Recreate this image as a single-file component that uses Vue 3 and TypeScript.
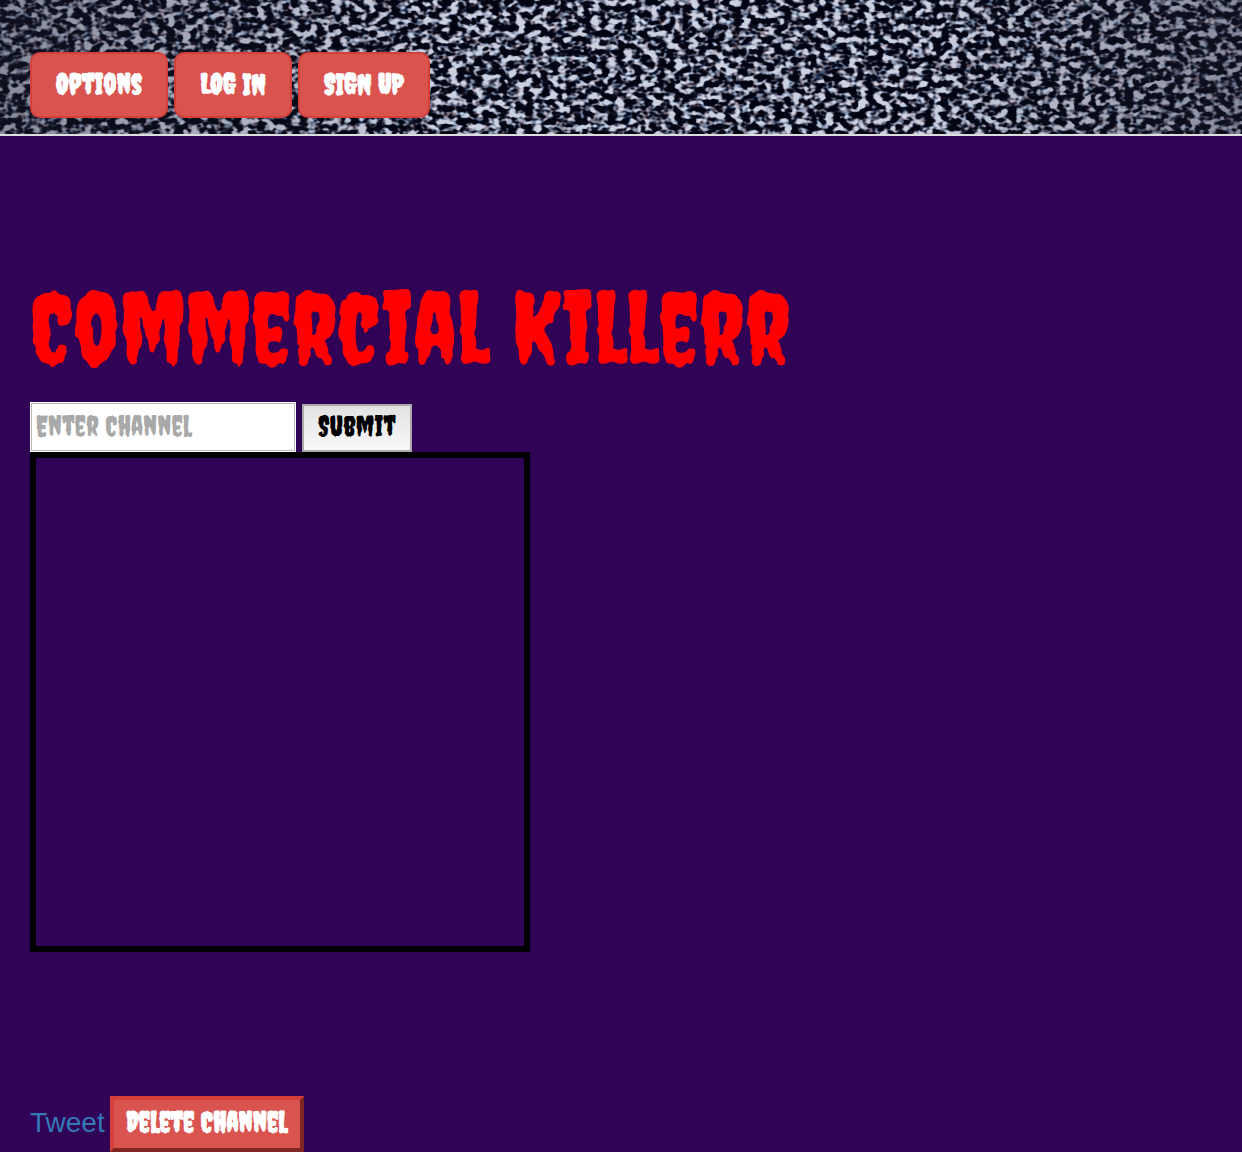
<script setup lang="ts">
import { ref } from 'vue'

const channel = ref('')
const navItems: { label: string; size: string }[] = [
  { label: 'Options', size: 'wide' },
  { label: 'LOG IN', size: 'narrow' },
  { label: 'SIGN UP', size: 'medium' },
]
</script>

<template>
  <div class="page">
    <header class="masthead">
      <svg class="static" aria-hidden="true">
        <defs>
          <filter id="tv-static" x="0" y="0" width="100%" height="100%" color-interpolation-filters="sRGB">
            <feTurbulence type="fractalNoise" baseFrequency="0.12 0.16" numOctaves="2" seed="41" result="grain" />
            <feColorMatrix
              in="grain"
              type="matrix"
              values="3 2.3 0.6 0 -2.58  3 2.3 0.8 0 -2.68  3 2.3 0.9 0 -2.7  0 0 0 0 1"
            />
            <feComponentTransfer>
              <feFuncR type="table" tableValues="0.01 0.08 0.38 0.62 0.8" />
              <feFuncG type="table" tableValues="0.02 0.09 0.4 0.64 0.82" />
              <feFuncB type="table" tableValues="0.07 0.14 0.44 0.7 0.88" />
            </feComponentTransfer>
          </filter>
          <linearGradient id="vignette">
            <stop offset="0" stop-color="#202030" stop-opacity="0.4" />
            <stop offset="0.35" stop-color="#202030" stop-opacity="0" />
            <stop offset="0.75" stop-color="#202030" stop-opacity="0" />
            <stop offset="1" stop-color="#202030" stop-opacity="0.4" />
          </linearGradient>
        </defs>
        <rect width="100%" height="100%" filter="url(#tv-static)" />
        <rect width="100%" height="100%" fill="url(#vignette)" />
      </svg>
      <nav class="nav">
        <button v-for="item in navItems" :key="item.label" type="button" class="nav-button" :class="item.size">
          {{ item.label }}
        </button>
      </nav>
    </header>

    <main class="content">
      <h1 class="title">Commercial Killerr</h1>
      <form class="channel-form" @submit.prevent>
        <input v-model="channel" class="channel-input" type="text" placeholder="Enter Channel" aria-label="Enter channel" />
        <button class="submit" type="submit">Submit</button>
      </form>
      <div class="player"></div>
      <div class="actions">
        <a class="tweet" href="#">Tweet</a>
        <button class="delete" type="button">Delete Channel</button>
      </div>
    </main>
  </div>
</template>

<style>
body {
  margin: 0;
  background: #300356;
}
</style>

<style scoped>
.page {
  min-height: 100vh;
  box-sizing: border-box;
  background: #300356;
  font-family: Creepster, "Liberation Sans Narrow", "Liberation Sans", sans-serif;
}

.masthead {
  position: relative;
  padding: 52px 30px 16px;
  border-bottom: 2px solid #ddd;
  background: #05060f;
}

.static {
  position: absolute;
  inset: 0;
  width: 100%;
  height: 100%;
}

.nav {
  position: relative;
  display: flex;
  gap: 6px;
}

button,
input {
  box-sizing: border-box;
  font-family: inherit;
  font-size: 28px;
}

button {
  padding: 0 0 4px;
  font-weight: 700;
  line-height: 32px;
  white-space: nowrap;
  cursor: pointer;
}

.nav-button {
  height: 66px;
  padding-bottom: 2px;
  border: 2px solid #d43f3a;
  border-radius: 10px;
  background: #d9534f;
  color: #fff;
}

.wide {
  width: 138px;
}

.narrow {
  width: 118px;
}

.medium {
  width: 132px;
}

.content {
  padding: 140px 30px 0;
}

.title {
  margin: 0;
  color: #f00;
  font-size: 100px;
  font-weight: 400;
  line-height: 104px;
  white-space: nowrap;
}

.channel-form {
  display: flex;
  align-items: flex-end;
  gap: 6px;
  margin-top: 22px;
}

.channel-input {
  width: 266px;
  height: 50px;
  padding: 0 5px 4px;
  border: 1px solid #fff;
  outline: 1px solid #bbb5c0;
  outline-offset: -2px;
  background: #fff;
  color: #000;
  font-weight: 400;
}

.channel-input::placeholder {
  color: #a9a9a9;
  opacity: 1;
}

.submit {
  width: 110px;
  height: 48px;
  border: 2px solid #a9a9a9;
  background: linear-gradient(#e2e2e2, #f8f8f8);
  color: #000;
  font-weight: 400;
}

.player {
  box-sizing: border-box;
  width: 500px;
  max-width: 100%;
  height: 500px;
  border: 6px solid #000;
}

.actions {
  display: flex;
  align-items: center;
  gap: 5px;
  margin-top: 144px;
}

.tweet {
  padding-bottom: 2px;
  color: #337ab7;
  font-family: "Liberation Sans", sans-serif;
  font-size: 28px;
  line-height: 40px;
  text-decoration: none;
}

.delete {
  width: 194px;
  height: 56px;
  border: 4px solid;
  border-color: #d43f3a #7f2623 #7f2623 #d43f3a;
  background: #d9534f;
  color: #fff;
}
</style>
